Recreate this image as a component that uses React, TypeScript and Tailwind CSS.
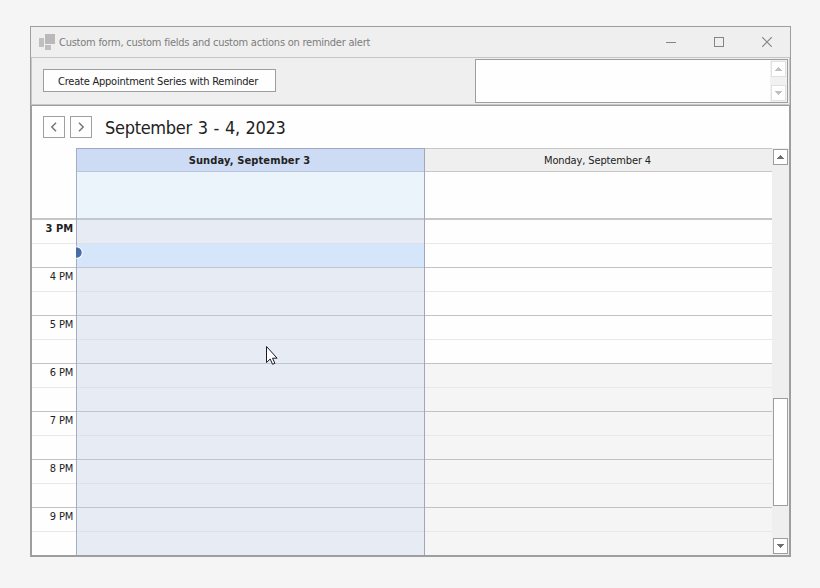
import React from "react";

const hours = ["3 PM", "4 PM", "5 PM", "6 PM", "7 PM", "8 PM", "9 PM"];
const slots = Array.from({ length: 14 }, (_, i) => i);

function Arrow({ up, className }: { up?: boolean; className: string }) {
  return (
    <svg width="7" height="4" viewBox="0 0 7 4" className={className} shapeRendering="crispEdges">
      <path fill="currentColor" d={up ? "M3 0h1v1h1v1h1v1h1v1H0V3h1V2h1V1h1z" : "M0 0h7v1H6v1H5v1H4v1H3V3H2V2H1V1H0z"} />
    </svg>
  );
}

function TitleBar() {
  return (
    <div className="flex h-[30px] shrink-0 items-center bg-[#efefef] pl-2">
      <svg width="16" height="16" viewBox="0 0 16 16" className="shrink-0" shapeRendering="crispEdges">
        <path fill="#c0bec1" d="M0 4h5v9H0z" />
        <path fill="#bab8bb" d="M6 0h10v10H6z" />
        <path fill="#c0bec1" d="M6 11h6v5H6z" />
      </svg>
      <span className="ml-1 whitespace-nowrap pt-0.5 text-[11px] leading-[14px] tracking-[-0.24px] text-[#7c7c7c]">
        Custom form, custom fields and custom actions on reminder alert
      </span>
      <div className="ml-auto flex items-center gap-[38px] pr-[18px] text-[#858585]">
        <svg width="10" height="10" viewBox="0 0 10 10" shapeRendering="crispEdges">
          <path d="M0 5.5h10" stroke="currentColor" />
        </svg>
        <svg width="10" height="10" viewBox="0 0 10 10" shapeRendering="crispEdges">
          <path d="M.5.5h9v9h-9z" fill="none" stroke="currentColor" />
        </svg>
        <svg width="10" height="10" viewBox="0 0 10 10">
          <path d="M.2.2l9.6 9.6M9.8.2L.2 9.8" stroke="currentColor" strokeWidth="1.2" />
        </svg>
      </div>
    </div>
  );
}

function Toolbar() {
  return (
    <div className="flex h-12 shrink-0 items-start justify-between border border-[#c6c6c6] bg-[#efefef] pl-[11px] pr-px">
      <button className="mt-[11px] flex h-[23px] w-[233px] items-center justify-center whitespace-nowrap border border-[#9e9e9e] bg-[#fefefe] pr-[3px] pt-0.5 text-[11px] leading-[14px] tracking-[-0.22px] text-[#222]">
        Create Appointment Series with Reminder
      </button>
      <div className="mt-px flex h-11 w-[313px] justify-end border border-[#9e9e9e] bg-[#fefefe]">
        <div className="flex w-[17px] flex-col items-center justify-between bg-[#f1f1f1] pb-px pt-px">
          <div className="flex h-4 w-[15px] items-center justify-center border border-[#e1e1e4] bg-[#fefefe]">
            <Arrow up className="text-[#c0c0c0]" />
          </div>
          <div className="flex h-4 w-[15px] items-center justify-center border border-[#e1e1e4] bg-[#fefefe]">
            <Arrow className="text-[#c0c0c0]" />
          </div>
        </div>
      </div>
    </div>
  );
}

function NavButton({ d }: { d: string }) {
  return (
    <button className="flex size-[22px] items-center justify-center border border-[#a0a0a0] bg-[#fefefe]">
      <svg width="8" height="10" viewBox="0 0 8 10">
        <path d={d} fill="none" stroke="#77777b" strokeWidth="1.5" />
      </svg>
    </button>
  );
}

function TimeRuler() {
  return (
    <div className="flex w-11 flex-col">
      <div className="h-[72px] shrink-0 border-b-2 border-[#c6c6c6]" />
      {hours.map((h, i) => (
        <div key={h} className="flex h-12 shrink-0 flex-col">
          <div
            className={
              "h-6 border-b border-[#e8e8e8] pr-[3px] pt-px text-right text-[11px] leading-[15px] text-[#222] " +
              (i === 0 ? "font-bold" : "tracking-[-0.2px]")
            }
          >
            {h}
          </div>
          <div className="h-6 border-b border-[#c2c2c2]" />
        </div>
      ))}
    </div>
  );
}

function DayColumn({ title, today }: { title: string; today?: boolean }) {
  return (
    <div className={"relative flex w-[348px] flex-col border-l " + (today ? "border-[#a5adc0]" : "border-[#a3a7b3]")}>
      <div
        className={
          "flex h-6 shrink-0 items-center justify-center border-y pt-0.5 text-[11px] leading-[14px] text-[#222] " +
          (today
            ? "border-t-[#9fabc6] border-b-[#bac5db] bg-[#cddbf4] pr-0.5 font-bold tracking-[0.13px]"
            : "border-[#c6c6c6] bg-[#efefef] pr-0.5 tracking-[-0.13px]")
        }
      >
        {title}
      </div>
      <div className={"h-12 shrink-0 border-b-2 " + (today ? "border-[#c2c6cf] bg-[#ebf3fb]" : "border-[#c6c6c6] bg-[#fefefe]")} />
      {slots.map((i) => (
        <div
          key={i}
          className={
            "h-6 shrink-0 border-b " +
            (today
              ? (i === 1 ? "bg-[#d5e5fa] " : "bg-[#e6ebf4] ") + (i % 2 ? "border-[#bfc4cd]" : "border-[#dce1ea]")
              : (i < 6 ? "bg-[#fefefe] " : "bg-[#f5f5f6] ") + (i % 2 ? "border-[#c2c2c2]" : "border-[#e8e8e9]"))
          }
        />
      ))}
      {today && (
        <div className="absolute -left-px top-[98px] h-[13px] w-[7px] overflow-hidden">
          <svg width="7" height="13" viewBox="0 0 7 13">
            <circle cx="0.5" cy="6.5" r="5.8" fill="#4a6ca6" stroke="#fff" strokeWidth="1.1" />
          </svg>
        </div>
      )}
    </div>
  );
}

function ScrollBar() {
  return (
    <div className="flex w-[17px] flex-col items-center bg-[#efeff0] pb-px pt-px">
      <div className="flex h-4 w-[15px] shrink-0 items-center justify-center border border-[#9e9e9e] bg-[#fefefe]">
        <Arrow up className="text-[#707070]" />
      </div>
      <div className="mt-[233px] h-[108px] w-[15px] shrink-0 border border-[#9e9e9e] bg-[#fefefe]" />
      <div className="mt-auto flex h-4 w-[15px] shrink-0 items-center justify-center border border-[#9e9e9e] bg-[#fefefe]">
        <Arrow className="text-[#707070]" />
      </div>
    </div>
  );
}

export default function App() {
  return (
    <div className="relative h-[588px] w-[820px] overflow-hidden bg-[#f5f5f5] pl-[30px] pt-[26px] font-['DejaVu_Sans_Condensed','DejaVu_Sans',sans-serif]">
      <div className="flex h-[531px] w-[761px] flex-col border border-[#9e9e9e] bg-[#fefefe]">
        <TitleBar />
        <Toolbar />
        <div className="flex h-[451px] flex-col border border-[#9e9e9e] bg-[#fefefe]">
          <div className="flex h-[42px] shrink-0 items-center gap-[5px] pl-[11px]">
            <NavButton d="M6 .7L1.8 5 6 9.3" />
            <NavButton d="M2 .7L6.2 5 2 9.3" />
            <h1 className="ml-2 whitespace-nowrap pt-0.5 text-[18px] leading-6 tracking-[-0.3px] text-[#222] [word-spacing:1px]">
              September 3 - 4, 2023
            </h1>
          </div>
          <div className="flex h-[407px] overflow-hidden">
            <TimeRuler />
            <DayColumn title="Sunday, September 3" today />
            <DayColumn title="Monday, September 4" />
            <ScrollBar />
          </div>
        </div>
      </div>
      <svg width="13" height="20" viewBox="0 0 13 20" className="absolute left-[266px] top-[346px]">
        <path
          d="M.5.5v16l3.7-3.5 2.4 5.3 2.3-1-2.4-5.1h4.6z"
          fill="#fff"
          stroke="#1b1b28"
          strokeWidth="1"
        />
      </svg>
    </div>
  );
}
